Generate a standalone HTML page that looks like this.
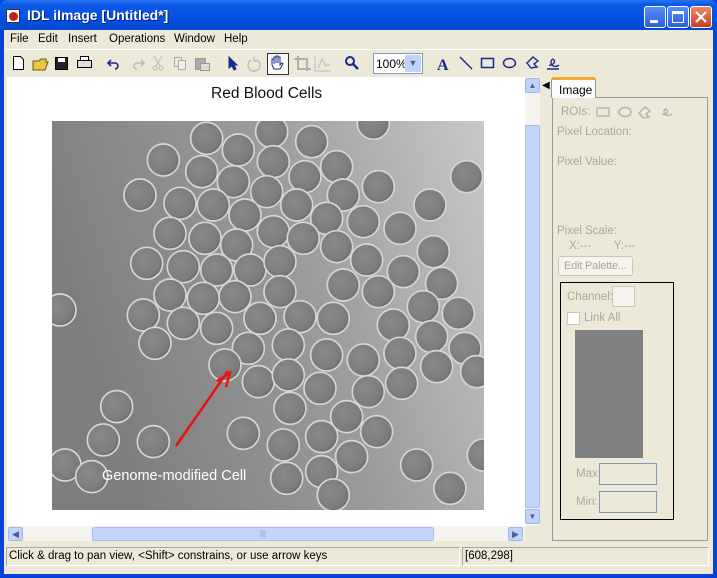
<!DOCTYPE html>
<html><head><meta charset="utf-8"><style>
*{margin:0;padding:0;box-sizing:border-box}
body{width:717px;height:578px;overflow:hidden;background:#0842d8;font-family:"Liberation Sans",sans-serif;position:relative}
.a{position:absolute;white-space:nowrap}
.tb{left:0;top:0;width:717px;height:31px;background:linear-gradient(#2a72f0 0%,#0a5ae8 15%,#0450e0 60%,#0348d0 100%);border-radius:7px 7px 0 0}
.frame{left:4px;top:30px;width:709px;height:544px;background:#ece9d8}
.menu span{position:absolute;top:2px;font-size:11.5px;color:#000}
.btn{width:22px;height:22px;border:1px solid #fff;border-radius:3px}
.gt{font-size:11.5px;color:#aca899;position:absolute;white-space:nowrap}
</style></head><body>
<div class="a tb"></div>
<div class="a" style="left:6px;top:9px;width:14px;height:14px;background:#fff;border:1px solid #333;"><div style="margin:2px;width:9px;height:9px;border-radius:50%;background:#c02020"></div></div>
<div class="a" style="left:27px;top:7px;color:#fff;font-weight:bold;font-size:14px;text-shadow:1px 1px #0a1e80">IDL iImage [Untitled*]</div>
<div class="a btn" style="left:644px;top:6px;background:linear-gradient(#5a8cf8,#2a5ee0)"><div style="position:absolute;left:5px;top:13px;width:8px;height:3px;background:#fff"></div></div>
<div class="a btn" style="left:667px;top:6px;background:linear-gradient(#5a8cf8,#2a5ee0)"><div style="position:absolute;left:4px;top:4px;width:12px;height:12px;border:1px solid #fff;border-top:3px solid #fff"></div></div>
<div class="a btn" style="left:690px;top:6px;background:linear-gradient(#e88a6a,#c8401c)"><svg width="20" height="20" style="position:absolute;left:0;top:0"><path d="M5 5L15 15M15 5L5 15" stroke="#fff" stroke-width="2.2"/></svg></div>
<div class="a frame"></div>
<div class="a menu" style="left:0;top:31px;width:717px;height:18px">
<span style="left:10px">File</span><span style="left:38px">Edit</span><span style="left:68px">Insert</span><span style="left:109px">Operations</span><span style="left:174px">Window</span><span style="left:224px">Help</span></div>
<div class="a" style="left:5px;top:49px;width:708px;height:1px;background:#fff"></div>
<svg class="a" style="left:0;top:50px" width="560" height="27">
<g fill="none" stroke="#000">
<path d="M13.5 6.5h7l3 3v10h-10z" fill="#fff"/>
<path d="M33 11h6l2-2h5v3h2l-3 8h-12z" fill="#e8c840" stroke="#705810"/>
<rect x="55.5" y="7.5" width="12" height="12" fill="#222"/><rect x="58" y="8" width="7" height="4" fill="#fff" stroke="none"/>
<rect x="77.5" y="10.5" width="14" height="7" fill="#ddd"/><rect x="80.5" y="6.5" width="8" height="4" fill="#fff"/>
<path d="M111 10l-3 3 3 3M108 13h7a3 3 0 0 1 0 6" stroke="#1a2a90" stroke-width="1.6"/>
<path d="M141 10l3 3-3 3M144 13h-7a3 3 0 0 0 0 6" stroke="#bbb" stroke-width="1.6"/>
<path d="M154 6l6 10M162 6l-6 10" stroke="#b8b8b8"/><circle cx="155" cy="18" r="2" stroke="#b8b8b8"/><circle cx="161" cy="18" r="2" stroke="#b8b8b8"/>
<rect x="174.5" y="7.5" width="7" height="9" stroke="#aaa"/><rect x="178.5" y="10.5" width="7" height="9" stroke="#aaa" fill="#eee"/>
<rect x="195.5" y="8.5" width="10" height="11" fill="#aaa" stroke="#999"/><rect x="200.5" y="13.5" width="9" height="7" fill="#ddd" stroke="#999"/>
<path d="M229 7l8 8-3 0 2 4-2 1-2-4-3 2z" fill="#1a2a90" stroke="#1a2a90"/>
<path d="M251 10a6 6 0 1 0 6 0M254 7v4h3" stroke="#bbb" stroke-width="1.4"/>
<rect x="267.5" y="3.5" width="21" height="21" fill="#f8f8f4" stroke="#333"/>
<path d="M272 15v-6h2v5v-7h2v6v-7h2v7v-6h2v8l2-2 1 1-3 5h-6z" stroke="#1a2a90" fill="#fff"/>
<path d="M294 9h13v12M298 6v13h13" stroke="#b0b0b0" stroke-width="2"/>
<path d="M315 6v15h16M318 18l4-9 4 7 4-2" stroke="#bbb"/>
<circle cx="350" cy="11" r="4" stroke="#1a2a90" stroke-width="2"/><path d="M353 14l5 5" stroke="#1a2a90" stroke-width="2.5"/>
<text x="437" y="20" font-family="Liberation Serif" font-weight="bold" font-size="16" fill="#1a2a90" stroke="none">A</text>
<path d="M460 7l12 12" stroke="#1a2a90" stroke-width="1.4"/>
<rect x="481.5" y="8.5" width="12" height="9" stroke="#1a2a90" stroke-width="1.5"/>
<ellipse cx="509.5" cy="13" rx="6" ry="4.5" stroke="#1a2a90" stroke-width="1.5"/>
<path d="M533 7l5 4-4 3 3 3-6 1-4-5z" stroke="#1a2a90" stroke-width="1.4"/>
<path d="M553 16c-4-3-1-9 1-6 2 3-3 6-5 5m4 1c3 1 5 0 6-1M547 19h12" stroke="#1a2a90" stroke-width="1.4"/>
</g></svg>
<div class="a" style="left:373px;top:53px;width:50px;height:21px;background:#fff;border:1px solid #7f9db9"><span style="position:absolute;left:2px;top:3px;font-size:12px">100%</span><div style="position:absolute;right:1px;top:1px;width:16px;height:17px;background:#c1d3fb;border-radius:2px;color:#4d6185;font-size:9px;text-align:center;line-height:17px">&#9660;</div></div>
<div class="a" style="left:7px;top:77px;width:518px;height:449px;background:#fff"></div>
<div class="a" style="left:211px;top:85px;font-size:15.5px;color:#111">Red Blood Cells</div>
<svg class="a" style="left:52px;top:121px" width="432" height="389" viewBox="0 0 432 389">
<defs><linearGradient id="bg" x1="0" y1="0.3" x2="1" y2="0"><stop offset="0" stop-color="#7e7e7e"/><stop offset="0.5" stop-color="#9a9a9a"/><stop offset="1" stop-color="#c8c8c8"/></linearGradient>
<radialGradient id="c" cx="0.4" cy="0.4" r="0.6"><stop offset="0" stop-color="#8a8a8a"/><stop offset="0.85" stop-color="#7c7c7c"/><stop offset="1" stop-color="#6e6e6e"/></radialGradient></defs>
<rect width="432" height="389" fill="url(#bg)"/>
<g transform="translate(-2,-6) scale(0.3333)" fill="url(#c)" stroke="#d6d6d6" stroke-width="5">
<circle cx="470" cy="70" r="48"/><circle cx="565" cy="105" r="48"/><circle cx="665" cy="50" r="48"/><circle cx="785" cy="80" r="48"/><circle cx="340" cy="135" r="48"/><circle cx="455" cy="170" r="48"/><circle cx="670" cy="140" r="48"/><circle cx="550" cy="200" r="48"/><circle cx="765" cy="185" r="48"/><circle cx="860" cy="155" r="48"/><circle cx="270" cy="240" r="48"/><circle cx="390" cy="265" r="48"/><circle cx="490" cy="270" r="48"/><circle cx="650" cy="230" r="48"/><circle cx="740" cy="270" r="48"/><circle cx="880" cy="240" r="48"/><circle cx="985" cy="215" r="48"/><circle cx="1250" cy="185" r="48"/><circle cx="1140" cy="270" r="48"/><circle cx="360" cy="355" r="48"/><circle cx="465" cy="370" r="48"/><circle cx="585" cy="300" r="48"/><circle cx="830" cy="310" r="48"/><circle cx="940" cy="320" r="48"/><circle cx="1050" cy="340" r="48"/><circle cx="560" cy="390" r="48"/><circle cx="670" cy="350" r="48"/><circle cx="760" cy="370" r="48"/><circle cx="860" cy="395" r="48"/><circle cx="1150" cy="410" r="48"/><circle cx="290" cy="445" r="48"/><circle cx="400" cy="455" r="48"/><circle cx="500" cy="465" r="48"/><circle cx="600" cy="465" r="48"/><circle cx="690" cy="440" r="48"/><circle cx="950" cy="435" r="48"/><circle cx="1060" cy="470" r="48"/><circle cx="880" cy="510" r="48"/><circle cx="985" cy="530" r="48"/><circle cx="1175" cy="505" r="48"/><circle cx="360" cy="540" r="48"/><circle cx="460" cy="550" r="48"/><circle cx="555" cy="545" r="48"/><circle cx="690" cy="530" r="48"/><circle cx="280" cy="600" r="48"/><circle cx="400" cy="625" r="48"/><circle cx="500" cy="640" r="48"/><circle cx="630" cy="610" r="48"/><circle cx="750" cy="605" r="48"/><circle cx="850" cy="610" r="48"/><circle cx="1030" cy="630" r="48"/><circle cx="1120" cy="575" r="48"/><circle cx="1225" cy="595" r="48"/><circle cx="315" cy="685" r="48"/><circle cx="595" cy="700" r="48"/><circle cx="715" cy="690" r="48"/><circle cx="830" cy="720" r="48"/><circle cx="940" cy="735" r="48"/><circle cx="1050" cy="715" r="48"/><circle cx="1145" cy="665" r="48"/><circle cx="1245" cy="700" r="48"/><circle cx="1160" cy="755" r="48"/><circle cx="525" cy="750" r="48"/><circle cx="625" cy="800" r="48"/><circle cx="715" cy="780" r="48"/><circle cx="810" cy="820" r="48"/><circle cx="955" cy="830" r="48"/><circle cx="1055" cy="805" r="48"/><circle cx="1280" cy="770" r="48"/><circle cx="200" cy="875" r="48"/><circle cx="720" cy="880" r="48"/><circle cx="890" cy="905" r="48"/><circle cx="980" cy="950" r="48"/><circle cx="580" cy="955" r="48"/><circle cx="700" cy="990" r="48"/><circle cx="815" cy="965" r="48"/><circle cx="905" cy="1025" r="48"/><circle cx="160" cy="975" r="48"/><circle cx="310" cy="980" r="48"/><circle cx="815" cy="1070" r="48"/><circle cx="1100" cy="1050" r="48"/><circle cx="1200" cy="1120" r="48"/><circle cx="45" cy="1050" r="48"/><circle cx="125" cy="1085" r="48"/><circle cx="710" cy="1090" r="48"/><circle cx="850" cy="1140" r="48"/><circle cx="30" cy="585" r="48"/><circle cx="970" cy="25" r="48"/><circle cx="1300" cy="1020" r="48"/>
</g>
<path d="M124 325L176 250M165 260l13-8-4 14" stroke="#f01010" stroke-width="2.5" fill="none"/>
<text x="50" y="359" font-family="Liberation Sans" font-size="14.5" fill="#fff">Genome-modified Cell</text>
</svg>
<div class="a" style="left:525px;top:77px;width:15px;height:449px;background:#f4f3ee"></div>
<div class="a" style="left:525px;top:78px;width:15px;height:15px;background:#c1d3fb;border:1px solid #a0b8e8;border-radius:2px;font-size:8px;color:#4d6185;text-align:center;line-height:13px">&#9650;</div>
<div class="a" style="left:525px;top:125px;width:15px;height:383px;background:#c4d4fa;border:1px solid #a8bef0;border-radius:2px"></div>
<div class="a" style="left:525px;top:509px;width:15px;height:15px;background:#c1d3fb;border:1px solid #a0b8e8;border-radius:2px;font-size:8px;color:#4d6185;text-align:center;line-height:13px">&#9660;</div>
<div class="a" style="left:7px;top:526px;width:518px;height:15px;background:#f4f3ee"></div>
<div class="a" style="left:8px;top:527px;width:15px;height:14px;background:#c1d3fb;border:1px solid #a0b8e8;border-radius:2px;font-size:9px;color:#4d6185;text-align:center;line-height:12px">&#9664;</div>
<div class="a" style="left:92px;top:527px;width:342px;height:14px;background:#c4d4fa;border:1px solid #a8bef0;border-radius:2px;text-align:center;font-size:8px;color:#8aa0d0;line-height:12px">|||</div>
<div class="a" style="left:508px;top:527px;width:15px;height:14px;background:#c1d3fb;border:1px solid #a0b8e8;border-radius:2px;font-size:9px;color:#4d6185;text-align:center;line-height:12px">&#9654;</div>
<div class="a" style="left:542px;top:80px;font-size:10px">&#9664;</div>
<div class="a" style="left:552px;top:97px;width:156px;height:444px;border:1px solid #919b9c;background:#ece9d8"></div>
<div class="a" style="left:551px;top:77px;width:45px;height:21px;background:#fcfcfe;border:1px solid #919b9c;border-bottom:none;border-top:3px solid #f5a830;border-radius:3px 3px 0 0;font-size:12px;padding:3px 0 0 7px">Image</div>
<div class="gt" style="left:561px;top:106px">ROIs:</div>
<svg class="a" style="left:590px;top:104px" width="90" height="16" fill="none" stroke="#b8b5a8" stroke-width="1.5"><rect x="7" y="4" width="12" height="8"/><ellipse cx="35" cy="8" rx="6" ry="4.5"/><path d="M55 3l5 4-4 3 3 3-6 1-4-5z"/><path d="M76 11c-4-3-1-8 1-5 2 3-3 6-5 4m4 1c3 1 5 0 6-1"/></svg>
<div class="gt" style="left:557px;top:126px">Pixel Location:</div>
<div class="gt" style="left:557px;top:156px">Pixel Value:</div>
<div class="gt" style="left:557px;top:225px">Pixel Scale:</div>
<div class="gt" style="left:569px;top:240px">X:---&nbsp;&nbsp;&nbsp;&nbsp;&nbsp;&nbsp;&nbsp;Y:---</div>
<div class="a" style="left:558px;top:256px;width:75px;height:20px;border:1px solid #c9c7ba;border-radius:3px;background:#f4f3ee;font-size:11px;color:#aca899;padding:3px 0 0 5px;letter-spacing:-0.2px">Edit Palette...</div>
<div class="a" style="left:560px;top:282px;width:114px;height:238px;border:1px solid #000"></div>
<div class="gt" style="left:567px;top:291px">Channel:</div>
<div class="a" style="left:612px;top:286px;width:23px;height:21px;border:1px solid #c9c7ba;background:#f4f3ee"></div>
<div class="a" style="left:567px;top:312px;width:13px;height:13px;border:1px solid #c9c7ba;background:#fff"></div>
<div class="gt" style="left:584px;top:312px">Link All</div>
<div class="a" style="left:575px;top:330px;width:68px;height:128px;background:#808080"></div>
<div class="gt" style="left:576px;top:468px">Max:</div>
<div class="a" style="left:599px;top:463px;width:58px;height:22px;border:1px solid #7f9db9"></div>
<div class="gt" style="left:576px;top:496px">Min:</div>
<div class="a" style="left:599px;top:491px;width:58px;height:22px;border:1px solid #7f9db9"></div>
<div class="a" style="left:6px;top:547px;width:454px;height:19px;border:1px solid #aca899;border-right-color:#fff;border-bottom-color:#fff;font-size:11.5px;padding:2px 0 0 2px">Click &amp; drag to pan view, &lt;Shift&gt; constrains, or use arrow keys</div>
<div class="a" style="left:462px;top:547px;width:247px;height:19px;border:1px solid #aca899;border-right-color:#fff;border-bottom-color:#fff;font-size:11.5px;padding:2px 0 0 2px">[608,298]</div>
</body></html>
